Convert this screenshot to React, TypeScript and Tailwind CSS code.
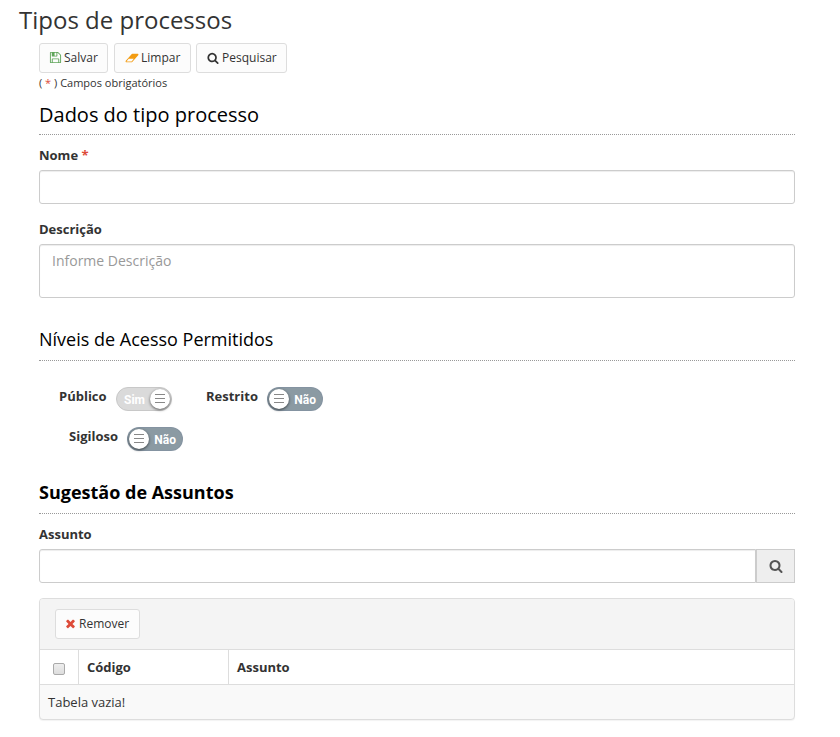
import React from "react";

type IconProps = { className?: string };

const FloppyIcon = ({ className }: IconProps) => (
  <svg viewBox="0 0 1792 1792" className={className} fill="currentColor">
    <path d="M512 1536h768v-384h-768v384zm896 0h128v-896q0-14-10-38.5t-20-34.5l-281-281q-10-10-34-20t-39-10v416q0 40-28 68t-68 28h-576q-40 0-68-28t-28-68v-416h-128v1280h128v-416q0-40 28-68t68-28h832q40 0 68 28t28 68v416zm-384-928v-320q0-13-9.5-22.5t-22.5-9.5h-192q-13 0-22.5 9.5t-9.5 22.5v320q0 13 9.5 22.5t22.5 9.5h192q13 0 22.5-9.5t9.5-22.5zm640 32v928q0 40-28 68t-68 28h-1344q-40 0-68-28t-28-68v-1344q0-40 28-68t68-28h928q40 0 88 20t76 48l280 280q28 28 48 76t20 88z" />
  </svg>
);

const EraserIcon = ({ className }: IconProps) => (
  <svg viewBox="0 0 2048 1792" className={className} fill="currentColor">
    <path d="M960 1408l336-384h-768l-336 384h768zm1013-1077q15 34 9.5 71.5t-30.5 65.5l-896 1024q-38 44-96 44h-768q-38 0-69.5-20.5t-47.5-54.5q-15-34-9.5-71.5t30.5-65.5l896-1024q38-44 96-44h768q38 0 69.5 20.5t47.5 54.5z" />
  </svg>
);

const SearchIcon = ({ className }: IconProps) => (
  <svg viewBox="0 0 1792 1792" className={className} fill="currentColor">
    <path d="M1216 832q0-185-131.5-316.5t-316.5-131.5-316.5 131.5-131.5 316.5 131.5 316.5 316.5 131.5 316.5-131.5 131.5-316.5zm512 832q0 52-38 90t-90 38q-54 0-90-38l-343-342q-179 124-399 124-143 0-273.5-55.5t-225-150-150-225-55.5-273.5 55.5-273.5 150-225 225-150 273.5-55.5 273.5 55.5 225 150 150 225 55.5 273.5q0 220-124 399l343 343q37 37 37 90z" />
  </svg>
);

const TimesIcon = ({ className }: IconProps) => (
  <svg viewBox="0 0 1792 1792" className={className} fill="currentColor">
    <path d="M1490 1322q0 40-28 68l-136 136q-28 28-68 28t-68-28l-294-294-294 294q-28 28-68 28t-68-28l-136-136q-28-28-28-68t28-68l294-294-294-294q-28-28-28-68t28-68l136-136q28-28 68-28t68 28l294 294 294-294q28-28 68-28t68 28l136 136q28 28 28 68t-28 68l-294 294 294 294q28 28 28 68z" />
  </svg>
);

const Button = ({ className, children }: { className: string; children: React.ReactNode }) => (
  <button
    className={`flex h-[30px] items-center rounded-[3px] border border-[#ddd] bg-[#fcfcfc] pl-[10px] text-[12px] whitespace-nowrap text-[#333] ${className}`}
  >
    {children}
  </button>
);

const Knob = () => (
  <span className="flex size-[20px] flex-col items-center gap-[3px] rounded-full bg-white pt-[5px] shadow-[0_1px_3px_rgba(0,0,0,0.6)]">
    <span className="h-px w-[10px] bg-[#888]" />
    <span className="h-px w-[10px] bg-[#888]" />
    <span className="h-px w-[10px] bg-[#888]" />
  </span>
);

const Toggle = ({ on = false }: { on?: boolean }) =>
  on ? (
    <span className="flex h-6 w-14 items-center justify-between rounded-full border border-[#c8c8c8] bg-[#dadada] pr-px pl-[7px] font-[Roboto,sans-serif] text-[12px] font-bold text-white">
      <span className="pt-[2px]">Sim</span>
      <Knob />
    </span>
  ) : (
    <span className="flex h-6 w-14 items-center justify-between rounded-full border border-[#8090a0]/60 bg-[#8b9aa3] pr-[6px] pl-px font-[Roboto,sans-serif] text-[12px] font-bold text-white">
      <Knob />
      <span className="pt-[2px]">Não</span>
    </span>
  );

export default function App() {
  return (
    <main className="h-[737px] w-[840px] overflow-hidden bg-white font-['Open_Sans',sans-serif] text-[13px] text-[#333]">
      <h1 className="h-[43px] pt-[4px] pl-[19px] text-[24px] leading-[32px]">Tipos de processos</h1>
      <div className="ml-[39px] w-[756px]">
        <div className="flex">
          <Button className="mr-[6px] w-[69px]">
            <FloppyIcon className="mr-[2px] mb-px -ml-px size-[13px] text-[#5fa55a]" />
            Salvar
          </Button>
          <Button className="mr-[5px] w-[77px]">
            <EraserIcon className="mr-[2px] mb-px h-[12px] w-[14px] text-[#f39c12]" />
            Limpar
          </Button>
          <Button className="w-[91px]">
            <SearchIcon className="mr-[3px] mb-px size-[12px]" />
            Pesquisar
          </Button>
        </div>
        <p className="h-[20px] text-[11px] leading-[20px]">
          ( <span className="text-[#dd4b39]">*</span> ) Campos obrigatórios
        </p>
        <h2 className="h-[42px] border-b border-dotted border-[#999] text-[20px] leading-[43px] text-black">
          Dados do tipo processo
        </h2>
        <label className="mt-[10px] block h-[25px] leading-[20px] font-bold">
          Nome <span className="text-[#dd4b39]">*</span>
        </label>
        <input className="block h-[34px] w-full rounded-[3px] border border-[#ccc] px-3 shadow-[inset_0_1px_1px_rgba(0,0,0,0.075)] outline-none" />
        <label className="mt-[15px] block h-[25px] leading-[20px] font-bold">Descrição</label>
        <textarea
          className="block h-[54px] w-full resize-none rounded-[3px] border border-[#ccc] px-3 py-[6px] text-[14px] leading-[20px] shadow-[inset_0_1px_1px_rgba(0,0,0,0.075)] outline-none placeholder:text-[#999]"
          placeholder="Informe Descrição"
        />
        <h3 className="mt-[20px] h-[43px] border-b border-dotted border-[#999] text-[18px] leading-[42px] text-black">
          Níveis de Acesso Permitidos
        </h3>
        <div className="mt-[26px] flex h-10 pl-[20px] font-bold">
          <span className="w-[57px] leading-[18px]">Público</span>
          <Toggle on />
          <span className="ml-[34px] w-[61px] leading-[18px]">Restrito</span>
          <Toggle />
        </div>
        <div className="flex h-10 pl-[30px] font-bold">
          <span className="w-[58px] leading-[18px]">Sigiloso</span>
          <Toggle />
        </div>
        <h3 className="mt-[5px] h-[42px] border-b border-dotted border-[#999] text-[18px] leading-[40px] font-bold text-black">
          Sugestão de Assuntos
        </h3>
        <label className="mt-[10px] block h-[25px] leading-[20px] font-bold">Assunto</label>
        <div className="flex h-[34px]">
          <input className="h-full w-[717px] rounded-l-[3px] border border-[#ccc] px-3 shadow-[inset_0_1px_1px_rgba(0,0,0,0.075)] outline-none" />
          <button className="flex w-[39px] items-center justify-center border border-[#ccc] bg-[#eee] text-[#555]">
            <SearchIcon className="size-[14px]" />
          </button>
        </div>
        <section className="mt-[15px] h-[122px] overflow-hidden rounded-[4px] border border-[#ddd] bg-[#f9f9f9] shadow-[0_1px_1px_rgba(0,0,0,0.05)]">
          <div className="h-[51px] border-b border-[#ddd] bg-[#f4f4f4] pt-[10px] pl-[15px]">
            <Button className="w-[85px]">
              <TimesIcon className="mr-[2px] mb-px -ml-[2px] size-[13px] text-[#dd4b39]" />
              Remover
            </Button>
          </div>
          <div className="flex h-[35px] border-b border-[#ddd] bg-white leading-[34px] font-bold">
            <div className="w-[39px] border-r border-[#ddd] pt-[13px] pl-[13px]">
              <span className="block size-[12px] rounded-[2px] border border-[#aaa] bg-linear-to-b from-[#eee] to-[#ddd]" />
            </div>
            <div className="w-[150px] border-r border-[#ddd] pl-2">Código</div>
            <div className="pl-2">Assunto</div>
          </div>
          <div className="pl-2 leading-[34px]">Tabela vazia!</div>
        </section>
      </div>
    </main>
  );
}
